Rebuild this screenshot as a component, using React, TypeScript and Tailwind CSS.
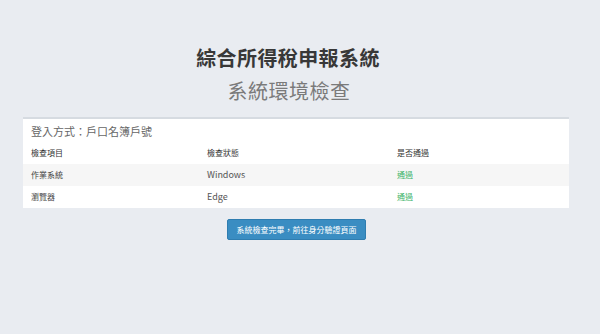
export default function App() {
  const font = { fontFamily: '"Noto Sans CJK TC", "Noto Sans", "Liberation Sans", sans-serif' };
  const rows = [
    { item: "作業系統", status: "Windows", ok: "通過" },
    { item: "瀏覽器", status: "Edge", ok: "通過" },
  ];
  return (
    <div className="w-[600px] h-[334px] bg-[#e9ecf1] overflow-hidden" style={font}>
      <div className="flex flex-col items-center pt-[44px]">
        <div className="mr-[24px] text-[20px] leading-[28px] font-bold text-[#383838] tracking-[0.4px]">綜合所得稅申報系統</div>
        <div className="mr-[22px] mt-[5px] text-[20px] leading-[28px] text-[#7a7a7a] tracking-[0.5px]">系統環境檢查</div>
      </div>
      <div className="ml-[23px] mt-[12px] w-[546px] bg-white border-t-2 border-[#d6dbe1]">
        <div className="px-[8px] pt-[3px] h-[22px] text-[11px] leading-[18px] text-[#666666]">登入方式：戶口名簿戶號</div>
        <div className="grid grid-cols-[176px_190px_1fr] px-[8px] h-[23px] items-center text-[8px] text-[#333333]">
          <div>檢查項目</div>
          <div>檢查狀態</div>
          <div>是否通過</div>
        </div>
        {rows.map((r, i) => (
          <div
            key={i}
            className={`grid grid-cols-[176px_190px_1fr] px-[8px] h-[22px] items-center ${i === 0 ? "bg-[#f6f6f6]" : "bg-white"}`}
          >
            <div className="text-[8px] text-[#444444]">{r.item}</div>
            <div className="text-[9px] text-[#555555]">{r.status}</div>
            <div className="text-[8px] text-[#3bb36a]">{r.ok}</div>
          </div>
        ))}
      </div>
      <div className="flex mt-[11px] pl-[227px]">
        <button className="w-[139px] h-[21px] bg-[#3a8dc2] border border-[#2f7db0] rounded-[2px] text-white text-[8px] leading-none">
          系統檢查完畢，前往身分驗證頁面
        </button>
      </div>
    </div>
  );
}
